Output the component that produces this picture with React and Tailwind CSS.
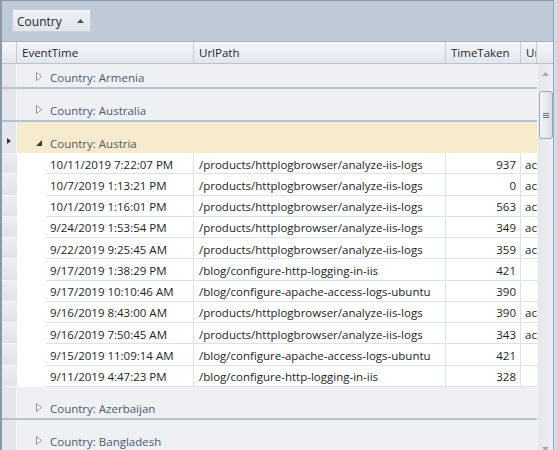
import React from 'react';

const font = { fontFamily: '"Open Sans", "Noto Sans", sans-serif' };

const rows = [
  ['10/11/2019 7:22:07 PM', '/products/httplogbrowser/analyze-iis-logs', '937', 'ac'],
  ['10/7/2019 1:13:21 PM', '/products/httplogbrowser/analyze-iis-logs', '0', 'ac'],
  ['10/1/2019 1:16:01 PM', '/products/httplogbrowser/analyze-iis-logs', '563', 'ac'],
  ['9/24/2019 1:53:54 PM', '/products/httplogbrowser/analyze-iis-logs', '349', 'ac'],
  ['9/22/2019 9:25:45 AM', '/products/httplogbrowser/analyze-iis-logs', '359', 'ac'],
  ['9/17/2019 1:38:29 PM', '/blog/configure-http-logging-in-iis', '421', ''],
  ['9/17/2019 10:10:46 AM', '/blog/configure-apache-access-logs-ubuntu', '390', ''],
  ['9/16/2019 8:43:00 AM', '/products/httplogbrowser/analyze-iis-logs', '390', 'ac'],
  ['9/16/2019 7:50:45 AM', '/products/httplogbrowser/analyze-iis-logs', '343', 'ac'],
  ['9/15/2019 11:09:14 AM', '/blog/configure-apache-access-logs-ubuntu', '421', ''],
  ['9/11/2019 4:47:23 PM', '/blog/configure-http-logging-in-iis', '328', ''],
];

function Collapsed() {
  return (
    <svg width="6" height="9" viewBox="0 0 6 9" className="shrink-0">
      <path d="M0.5 0.5 L5.5 4.5 L0.5 8.5 Z" fill="#fff" stroke="#8e96a2" strokeWidth="1" />
    </svg>
  );
}

function Expanded() {
  return (
    <svg width="6" height="6" viewBox="0 0 6 6" className="shrink-0">
      <path d="M6 0 L6 6 L0 6 Z" fill="#3c3c3c" />
    </svg>
  );
}

function GroupRow({ name, top = 10, expanded, current }) {
  return (
    <div
      className={`flex shrink-0 ${expanded ? 'bg-[#f6ebcd]' : 'bg-[#eef0f4] border-b-2 border-[#b9c1cd]'}`}
      style={{ height: top + 21 + (expanded ? 0 : 2) }}
    >
      <div className="w-[15px] shrink-0 bg-[#e3e6ec] border-r border-[#f4f5f8] flex items-end justify-center pb-[9px]">
        {current && (
          <svg width="4" height="6" viewBox="0 0 4 6">
            <path d="M0 0 L4 3 L0 6 Z" fill="#333" />
          </svg>
        )}
      </div>
      <div className="flex-1 flex items-end">
        <div className="h-[21px] flex items-center pl-[19px] gap-[8px] text-[11.5px] text-[#4d5a6c]">
          {expanded ? <Expanded /> : <Collapsed />}
          <span className="pt-[2px]">Country: {name}</span>
        </div>
      </div>
    </div>
  );
}

function DataRow({ r }) {
  return (
    <div className="flex h-[21.27px] shrink-0 bg-white text-[11.5px] text-[#1e1e1e]">
      <div className="w-[15px] shrink-0 bg-gradient-to-b from-[#eceef2] to-[#dfe3e9] border-b border-[#f5f6f8]" />
      <div className="w-[29px] shrink-0 bg-white" />
      <div className="w-[148px] shrink-0 border-r border-b border-[#dde2ea] pl-[4px] pt-[2px] flex items-center whitespace-nowrap overflow-hidden">{r[0]}</div>
      <div className="w-[252px] shrink-0 border-r border-b border-[#dde2ea] pl-[5px] pt-[2px] flex items-center whitespace-nowrap overflow-hidden">{r[1]}</div>
      <div className="w-[75px] shrink-0 border-r border-b border-[#dde2ea] pr-[4px] pt-[2px] flex items-center justify-end">{r[2]}</div>
      <div className="w-[16px] shrink-0 border-b border-[#dde2ea] pl-[4px] pt-[2px] flex items-center whitespace-nowrap overflow-hidden">{r[3]}</div>
    </div>
  );
}

function HeaderCell({ w, children, last }) {
  return (
    <div className={`${w} shrink-0 h-full flex items-center pl-[5px] pt-[1px] overflow-hidden whitespace-nowrap ${last ? '' : 'border-r border-[#c5ccd8]'}`}>
      {children}
    </div>
  );
}

export default function App() {
  return (
    <div className="w-[557px] h-[450px] overflow-hidden flex bg-[#eef0f4]" style={font}>
      <div className="w-[553px] h-full flex flex-col border-l-2 border-t border-[#8d97a5]">
        {/* group-by panel */}
        <div className="h-[41px] shrink-0 bg-[#bfcad9] border-b border-[#a9b3c2] pl-[10px] pt-[8px]">
          <div className="w-[79px] h-[23px] bg-gradient-to-b from-[#eef1f5] to-[#e2e6ec] border border-[#c9d0da] flex items-center justify-between pl-[4px] pr-[6px] text-[12px] text-[#1b2230]">
            <span className="pt-[2px]">Country</span>
            <svg width="7" height="4" viewBox="0 0 7 4">
              <path d="M0 4 L3.5 0 L7 4 Z" fill="#4a4f57" />
            </svg>
          </div>
        </div>

        {/* column headers */}
        <div className="h-[22px] shrink-0 flex bg-gradient-to-b from-[#f5f6f9] to-[#e2e6ed] border-b border-[#b9c2cf] text-[11.5px] text-[#1e2633]">
          <div className="w-[15px] shrink-0 h-full border-r border-[#c5ccd8]" />
          <HeaderCell w="w-[177px]">EventTime</HeaderCell>
          <HeaderCell w="w-[252px]">UrlPath</HeaderCell>
          <HeaderCell w="w-[75px]">TimeTaken</HeaderCell>
          <HeaderCell w="w-[16px]">Ur</HeaderCell>
          <HeaderCell w="w-[14px]" last />
        </div>

        {/* body */}
        <div className="flex-1 flex min-h-0">
          <div className="w-[535px] shrink-0 flex flex-col overflow-hidden">
            <GroupRow name="Armenia" top={2} />
            <GroupRow name="Australia" />
            <GroupRow name="Austria" expanded current />
            {rows.map((r, i) => (
              <DataRow key={i} r={r} />
            ))}
            <GroupRow name="Azerbaijan" />
            <GroupRow name="Bangladesh" />
          </div>

          {/* scrollbar */}
          <div className="w-[16px] shrink-0 bg-gradient-to-r from-[#e6e7eb] to-[#eeeff2] border-l border-[#f3f4f6] flex flex-col items-center relative">
            <svg width="7" height="4" viewBox="0 0 7 4" className="mt-[8px]">
              <path d="M0 4 L3.5 0 L7 4 Z" fill="#a3aab4" />
            </svg>
            <div className="mt-[15px] w-[14px] h-[48px] rounded-[3px] border border-[#a0a9b6] bg-gradient-to-r from-[#f3f5f8] via-[#e6e9ee] to-[#d7dbe3] flex flex-col items-center justify-center gap-[1px]">
              <div className="w-[6px] h-[1px] bg-[#6d7480]" />
              <div className="w-[6px] h-[1px] bg-[#6d7480]" />
              <div className="w-[6px] h-[1px] bg-[#6d7480]" />
            </div>
            <svg width="7" height="4" viewBox="0 0 7 4" className="absolute bottom-[-1px]">
              <path d="M0 0 L3.5 4 L7 0 Z" fill="#a3aab4" />
            </svg>
          </div>
        </div>
      </div>
      <div className="w-[4px] h-full bg-[#d3dce8] border-l border-[#9aa5b5]" />
    </div>
  );
}
